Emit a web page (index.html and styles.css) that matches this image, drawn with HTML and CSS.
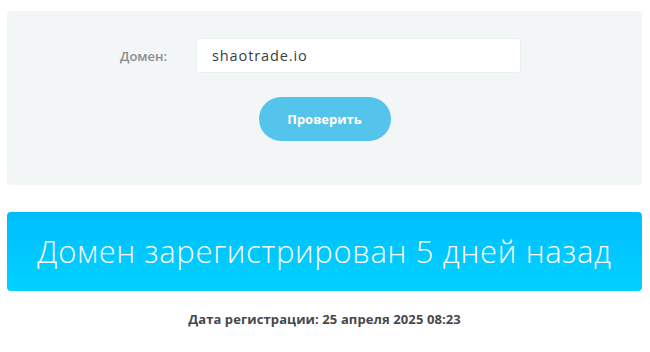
FILE: index.html
```html
<!DOCTYPE html>
<html>

<head>
	<meta charset="UTF-8">
	<meta name="viewport" content="width=device-width, initial-scale=1.0">
	<title>Проверка домена</title>
	<link rel="stylesheet" href="styles.css">
</head>

<body>
	<div class="container">
		<form class="check-form">
			<div class="row">
				<label class="label" for="domain">Домен:</label>
				<input type="text" id="domain" class="domain" value="shaotrade.io">
			</div>
			<div class="actions">
				<button type="button" class="btn-check">Проверить</button>
			</div>
		</form>
		<div class="result">Домен зарегистрирован 5 дней назад</div>
		<div class="reg-date">Дата регистрации: 25 апреля 2025 08:23</div>
	</div>
</body>

</html>
```

FILE: styles.css
```css
* {
	margin: 0px;
	padding: 0px;
	box-sizing: border-box;
}

body {
	background-color: #ffffff;
	font-family: "Open Sans", "Noto Sans", sans-serif;
}

.container {
	padding: 11px 8px 0px 7px;
}

.check-form {
	background-color: #f3f6f7;
	border-radius: 4px;
	height: 174px;
	padding-top: 27px;
}

.row {
	display: flex;
	align-items: center;
	padding-left: 113px;
}

.label {
	width: 76px;
	font-size: 13px;
	font-weight: 600;
	color: #8a8d8f;
}

.domain {
	width: 325px;
	height: 35px;
	border: 1px solid #eceff1;
	border-radius: 3px;
	background-color: #ffffff;
	padding: 0px 15px;
	font-family: "Open Sans", sans-serif;
	font-size: 14.5px;
	letter-spacing: 0.9px;
	color: #3a3d40;
	outline: none;
}

.actions {
	display: flex;
	justify-content: center;
	padding-top: 24px;
}

.btn-check {
	width: 132px;
	height: 44px;
	border: none;
	border-radius: 22px;
	background-color: #55c4ec;
	color: #ffffff;
	font-family: "Open Sans", sans-serif;
	font-size: 13px;
	font-weight: 700;
	cursor: pointer;
}

.result {
	margin-top: 27px;
	height: 79px;
	border-radius: 4px;
	background: linear-gradient(#00bdfd, #00d2ff);
	color: #ffffff;
	display: flex;
	align-items: center;
	justify-content: center;
	font-size: 31px;
	font-weight: 300;
	letter-spacing: 0.65px;
	padding-bottom: 1px;
}

.reg-date {
	text-align: center;
	padding-top: 19px;
	font-size: 13px;
	font-weight: 700;
	letter-spacing: 0.1px;
	color: #46494c;
}
```
